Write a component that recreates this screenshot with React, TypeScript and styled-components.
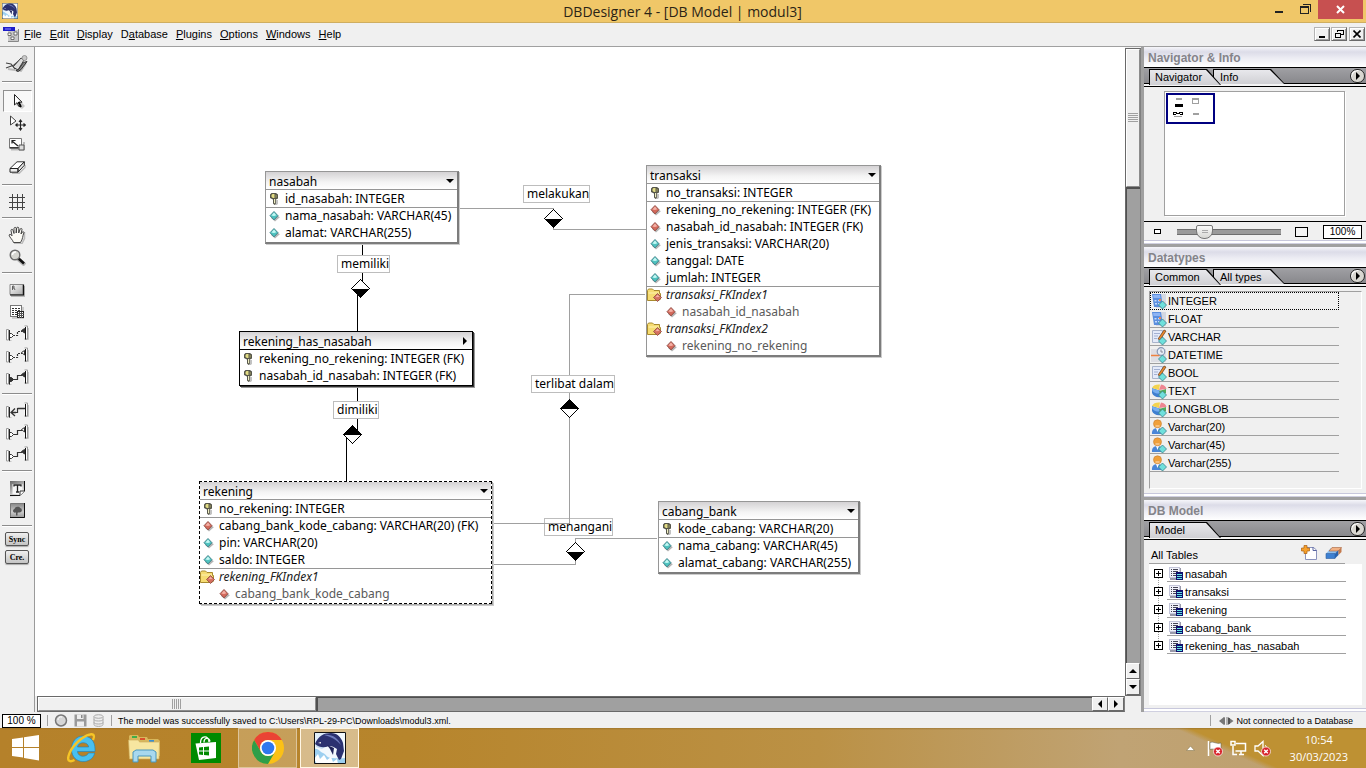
import React from "react";
import styled, { createGlobalStyle, css } from "styled-components";

const UI = `"Liberation Sans", Arial, sans-serif`;
const SEGOE = `"Open Sans", "Noto Sans", sans-serif`;
const DIAGRAM = `"Noto Sans", "Open Sans", sans-serif`;

const GlobalStyle = createGlobalStyle`
  *, *::before, *::after { box-sizing: border-box; }
  body { margin: 0; background: #f0f0f0; font-family: ${UI}; font-size: 11px; color: #000; }
  button { font: inherit; color: inherit; padding: 0; border: 0; background: none; cursor: default; }
  ul { list-style: none; margin: 0; padding: 0; }
  h1, h2, h3, p { margin: 0; font: inherit; }
  svg { display: block; flex: none; }
`;

const Window = styled.div`
  display: flex;
  flex-direction: column;
  min-height: 100vh;
`;

/* ---------- title bar ---------- */

const TitleBar = styled.header`
  display: flex;
  align-items: flex-start;
  height: 23px;
  background: #f0c768;
  border-bottom: 1px solid #cfae60;
`;
const TitleSide = styled.div`
  flex: 1;
  display: flex;
  padding: 3px 0 0 2px;
`;
const TitleText = styled.h1`
  font: 14px/23px ${SEGOE};
  color: #2b2416;
  white-space: nowrap;
`;
const WindowButtons = styled.div`
  flex: 1;
  display: flex;
  justify-content: flex-end;
  padding-right: 3px;
`;
const WindowButton = styled.button<{ $close?: boolean }>`
  display: flex;
  align-items: center;
  justify-content: center;
  width: ${(p) => (p.$close ? 45 : 26)}px;
  height: 19px;
  background: ${(p) => (p.$close ? "#c75050" : "transparent")};
`;

/* ---------- menu ---------- */

const MenuBar = styled.nav`
  display: flex;
  align-items: center;
  gap: 8px;
  height: 24px;
  padding: 0 1px 2px 3px;
  border-bottom: 1px solid #a0a0a0;
  font-size: 11px;
`;
const MenuIcon = styled.span`
  margin-right: -3px;
`;
const MdiButtons = styled.div`
  display: flex;
  gap: 1px;
  margin-left: auto;
`;
const MdiButton = styled.button<{ $apart?: boolean }>`
  display: flex;
  align-items: center;
  justify-content: center;
  width: 16px;
  height: 14px;
  margin-left: ${(p) => (p.$apart ? 1 : 0)}px;
  background: #f0f0f0;
  border: 1px solid;
  border-color: #b4b4b4 #696969 #696969 #b4b4b4;
  box-shadow: inset 1px 1px #fff, inset -1px -1px #a0a0a0;
`;

/* ---------- workspace ---------- */

const Workspace = styled.div`
  display: flex;
  flex: 1;
`;
const Toolbar = styled.aside`
  flex: 0 0 35px;
  border-right: 1px solid #9a9a9a;
`;
const ToolGroup = styled.div<{ $top?: number; $bottom?: number }>`
  display: flex;
  flex-direction: column;
  align-items: center;
  margin: 0 2px;
  padding: ${(p) => p.$top ?? 6}px 0 ${(p) => p.$bottom ?? 4}px;
  border-bottom: 1px solid #8c8c8c;
  box-shadow: 0 1px #fff;
  &:last-child { border-bottom: 0; box-shadow: none; gap: 4px; }
`;
const ToolButton = styled.button<{ $active?: boolean }>`
  display: flex;
  align-items: center;
  justify-content: center;
  width: 29px;
  height: 22px;
  ${(p) =>
    p.$active &&
    css`
      padding-left: 4px;
      background: #f8f8f8;
      border: 1px solid;
      border-color: #909090 #fff #fff #909090;
    `}
`;
const WordButton = styled.button`
  width: 24px;
  height: 14px;
  border: 1px solid #555;
  border-radius: 2px;
  background: linear-gradient(#efefef, #c4c4c4);
  box-shadow: 0 1px 1px #aaa;
  font: bold 8px/11px "Liberation Serif", serif;
  text-align: center;
`;

const Main = styled.main`
  display: flex;
  flex-direction: column;
  flex: 1;
  min-width: 0;
  background: #f0f0f0;
`;
const CanvasRow = styled.div`
  display: flex;
  flex: 1;
`;
const Canvas = styled.section`
  position: relative;
  flex: 1;
  background: #fff;
  overflow: hidden;
`;
const Wires = styled.svg`
  position: absolute;
  inset: 0;
  width: 100%;
  height: 100%;
`;

const ScrollTrack = styled.div<{ $horizontal?: boolean }>`
  display: flex;
  flex-direction: ${(p) => (p.$horizontal ? "row" : "column")};
  flex: ${(p) => (p.$horizontal ? "1" : "0 0 16px")};
  ${(p) => p.$horizontal ? css`height: 16px; margin-left: 2px;` : css`margin-top: 1px;`}
  background: #a0a0a0;
  border: 1px solid #696969;
  border-right-color: #808080;
`;
const ScrollThumb = styled.div<{ $horizontal?: boolean }>`
  display: flex;
  align-items: center;
  justify-content: center;
  flex: ${(p) => (p.$horizontal ? 277 : 137)} 1 0;
  background: #f0f0f0;
  border: 1px solid;
  border-color: #fff #8c8c8c #8c8c8c #fff;
`;
const ScrollRest = styled.div<{ $horizontal?: boolean }>`
  flex: ${(p) => (p.$horizontal ? 778 : 478)} 1 0;
  border-style: solid;
  border-color: #505050;
  border-width: ${(p) => (p.$horizontal ? "1px 0 0 2px" : "2px 0 0 1px")};
`;
const ScrollButton = styled.button`
  display: flex;
  align-items: center;
  justify-content: center;
  flex: 0 0 16px;
  background: #f0f0f0;
  border: 1px solid;
  border-color: #fff #696969 #696969 #fff;
`;
const ScrollBottom = styled.div`
  display: flex;
  padding-right: 16px;
`;

/* ---------- diagram nodes ---------- */

type Tone = "normal" | "strong" | "selected";

const Node = styled.article<{ $x: number; $y: number; $w: number; $tone: Tone }>`
  position: absolute;
  left: ${(p) => p.$x}px;
  top: ${(p) => p.$y}px;
  width: ${(p) => p.$w}px;
  padding-bottom: 1px;
  background: #fff;
  border: 1px solid #969696;
  font: 12px/17px ${DIAGRAM};
  white-space: nowrap;
  ${(p) =>
    p.$tone === "normal" &&
    css`
      border-width: 1px 2px 2px 1px;
      border-right-color: #7c7c7c;
      border-bottom-color: #7c7c7c;
      box-shadow: 1px 1px #ccc;
    `}
  ${(p) =>
    p.$tone === "strong" &&
    css`
      border-color: #000;
      box-shadow: 1px 1px #333, 2px 2px #999;
    `}
  ${(p) =>
    p.$tone === "selected" &&
    css`
      border: 1px dashed #000;
      box-shadow: 1px 1px #aaa, 2px 2px #ccc;
    `}
`;
const NodeHead = styled.h3<{ $strong: boolean }>`
  display: flex;
  align-items: center;
  justify-content: space-between;
  height: 18px;
  padding: 1px 3px 0;
  border-bottom: 1px solid ${(p) => (p.$strong ? "#000" : "#969696")};
  background: linear-gradient(#d4d2d4, #f4f4f4 60%, #fff);
`;
const Field = styled.li<{ $kind: Kind; $line?: boolean }>`
  display: flex;
  align-items: center;
  height: 17px;
  gap: ${(p) => (p.$kind === "index" ? 4 : 5)}px;
  padding-left: ${(p) => (p.$kind === "index" ? 0 : p.$kind === "sub" ? 19 : 3)}px;
  box-shadow: ${(p) => (p.$line ? "inset 0 1px #969696" : "none")};
  font-style: ${(p) => (p.$kind === "index" ? "italic" : "normal")};
  color: ${(p) => (p.$kind === "sub" ? "#5a5a5a" : p.$kind === "index" ? "#222" : "#000")};
`;
const Caption = styled.p<{ $x: number; $y: number }>`
  position: absolute;
  left: ${(p) => p.$x}px;
  top: ${(p) => p.$y}px;
  height: 18px;
  padding: 0 0 0 3px;
  background: #fff;
  border: 1px solid #bdbdbd;
  font: 12px/16px ${DIAGRAM};
  white-space: nowrap;
`;

type Kind = "key" | "fk" | "col" | "index" | "sub";
type Row = [Kind, string, boolean?];

const TABLES: { name: string; x: number; y: number; w: number; tone: Tone; rows: Row[] }[] = [
  { name: "nasabah", x: 230, y: 124, w: 194, tone: "normal", rows: [
    ["key", "id_nasabah: INTEGER"],
    ["col", "nama_nasabah: VARCHAR(45)", true],
    ["col", "alamat: VARCHAR(255)"],
  ] },
  { name: "transaksi", x: 611, y: 118, w: 235, tone: "normal", rows: [
    ["key", "no_transaksi: INTEGER"],
    ["fk", "rekening_no_rekening: INTEGER (FK)", true],
    ["fk", "nasabah_id_nasabah: INTEGER (FK)"],
    ["col", "jenis_transaksi: VARCHAR(20)"],
    ["col", "tanggal: DATE"],
    ["col", "jumlah: INTEGER"],
    ["index", "transaksi_FKIndex1", true],
    ["sub", "nasabah_id_nasabah"],
    ["index", "transaksi_FKIndex2"],
    ["sub", "rekening_no_rekening"],
  ] },
  { name: "rekening_has_nasabah", x: 204, y: 284, w: 234, tone: "strong", rows: [
    ["key", "rekening_no_rekening: INTEGER (FK)"],
    ["key", "nasabah_id_nasabah: INTEGER (FK)"],
  ] },
  { name: "rekening", x: 164, y: 434, w: 293, tone: "selected", rows: [
    ["key", "no_rekening: INTEGER"],
    ["fk", "cabang_bank_kode_cabang: VARCHAR(20) (FK)", true],
    ["col", "pin: VARCHAR(20)"],
    ["col", "saldo: INTEGER"],
    ["index", "rekening_FKIndex1", true],
    ["sub", "cabang_bank_kode_cabang"],
  ] },
  { name: "cabang_bank", x: 623, y: 454, w: 202, tone: "normal", rows: [
    ["key", "kode_cabang: VARCHAR(20)"],
    ["col", "nama_cabang: VARCHAR(45)", true],
    ["col", "alamat_cabang: VARCHAR(255)"],
  ] },
];

const CAPTIONS: [string, number, number][] = [
  ["melakukan", 488, 138],
  ["memiliki", 302, 208],
  ["terlibat dalam", 496, 328],
  ["dimiliki", 298, 354],
  ["menangani", 509, 471],
];

const KeyIcon = () => (
  <svg width="11" height="12" viewBox="0 0 11 12">
    <path d="M5 7h4v3.500L8 12H6z" fill="#999" opacity=".6" />
    <path d="M2.500 0h4.500L9 1.500v4L7 6.500v4L5.500 12 4 10.500v-4L1 5V1.500z" fill="#56564a" />
    <path d="M2.500 2l1-1h2v4L4 5 2.500 4z" fill="#e2dc84" />
    <path d="M6.500 1.500l1.200.7V4.500L6.500 5z" fill="#9a9762" />
    <path d="M5 6h1.200v4.500L5 10z" fill="#f0eec4" />
  </svg>
);
const Gem = ({ red }: { red?: boolean }) => (
  <svg width="11" height="12" viewBox="0 0 11 12">
    <path d="M6 3.500l4.800 3.800L6 11.500 2 8z" fill="#b4b4b4" />
    <path d="M5 1.500L9 5.700 5 9.900 1 5.700z" fill={red ? "#d46a5c" : "#4fc3c0"} stroke={red ? "#8b4a42" : "#3b7c84"} strokeWidth=".9" />
    <path d="M5 2.500L7.300 5.200 5 6 2.400 5.600z" fill={red ? "#f4b0a6" : "#c4f8f4"} />
  </svg>
);
const FolderIcon = () => (
  <svg width="15" height="14" viewBox="0 0 15 14">
    <path d="M.5 2.500l1-1.500h4l1.500 1.500h5.500v3h1V11L12 12.500H.5z" fill="#f6dc72" stroke="#a88a2e" />
    <path d="M1.500 4.500h10.500v1H1.500z" fill="#fff3b0" />
    <path d="M10.500 5.500L14.500 9.500 10.500 13.500 6.500 9.500z" fill="#d4705f" stroke="#8b4a42" strokeWidth=".8" />
    <path d="M10.500 6.800L12.600 9l-4.200.2z" fill="#f4b0a6" />
  </svg>
);
const FIELD_ICON: Record<Kind, React.ReactNode> = {
  key: <KeyIcon />, fk: <Gem red />, sub: <Gem red />, col: <Gem />, index: <FolderIcon />,
};

const Diamond = ({ x, y, up }: { x: number; y: number; up?: boolean }) => (
  <g>
    <path d={`M${x - 9} ${y}L${x} ${y - 9}L${x + 9} ${y}L${x} ${y + 9}Z`} fill="#fff" stroke="#000" />
    <path d={`M${x - 9} ${y}L${x} ${y + (up ? -9 : 9)}L${x + 9} ${y}Z`} fill="#000" />
  </g>
);

/* ---------- tool icons ---------- */

const Relation = ({ left, right, dotted }: { left: string; right: string; dotted?: boolean }) => (
  <svg width="23" height="18" viewBox="0 0 23 18" fill="none">
    <path d="M3 15.500h2.500M20 14.500h2.500V3" stroke="#c4c4c4" />
    <path d="M.5 4.500h2v10.500h-2z" fill="#fff" stroke="#999" />
    <path d="M3.500 5v10.500" stroke="#222" />
    <path d="M18.500 1h3v13h-3" fill="#fff" stroke="#999" />
    <path d="M19.500 2v12.500" stroke="#111" />
    <path d="M7 10.500h4.500V6.500H16" stroke="#333" strokeWidth="1.200" strokeDasharray={dotted ? "2 1" : undefined} />
    {left === "arrow" ? (
      <path d="M9 6.500L5 10.500 9 14M5 10.500h5M11.500 6.500H19" stroke="#333" strokeWidth="1.300" />
    ) : (
      <path d="M4 8.500h1.500L7.500 10.500 5.500 12.500H4" fill={left === "full" ? "#333" : "#fff"} stroke="#333" />
    )}
    {right !== "none" && (
      <path d="M18.500 3.500L15.500 5.500 18.500 8z" fill={right === "full" ? "#333" : "#fff"} stroke="#333" />
    )}
  </svg>
);

const ToolIcon = ({ name }: { name: string }) => {
  switch (name) {
    case "Work mode":
      return (
        <svg width="24" height="18" viewBox="0 0 24 18" fill="none">
          <path d="M3 14L16 16l5-8" stroke="#bbb" strokeWidth="2" />
          <path d="M1 8l5 1 4 5M1 13l8-3 6-5" stroke="#444" strokeWidth="1.200" />
          <path d="M8 12l8-9 3 2-6 10z" fill="#ddd" stroke="#444" />
          <path d="M11 15.500l2.500-1 5-7 3.500-1-6 8-3 2z" fill="#888" stroke="#333" />
          <circle cx="19.500" cy="3" r="2.500" fill="#c8c8c8" stroke="#888" strokeWidth=".8" />
        </svg>
      );
    case "Pointer":
      return (
        <svg width="14" height="16" viewBox="0 0 14 16">
          <path d="M6 6l7 7-3 3-6-4z" fill="#c8c8c8" />
          <path d="M2.500 1.500V12L5 9.700l2 4 1.600-1-1.800-3.500H10z" fill="#fff" stroke="#222" />
          <path d="M6.500 9l2.500 5" stroke="#000" strokeWidth="1.800" />
        </svg>
      );
    case "Move":
      return (
        <svg width="17" height="16" viewBox="0 0 17 16" fill="none">
          <path d="M1.500 1v9l5.500-4z" fill="#fff" stroke="#444" />
          <path d="M11.500 5.500v9M7 10h9M10 7l1.500-2L13 7M10 13l1.500 2 1.500-2M8.500 8.500L6.800 10l1.700 1.500M14.500 8.500L16.300 10l-1.800 1.500" stroke="#222" strokeWidth="1.100" />
        </svg>
      );
    case "Resize":
      return (
        <svg width="17" height="14" viewBox="0 0 17 14" fill="none">
          <path d="M2 11.500h13V4" stroke="#bbb" strokeWidth="2" />
          <path d="M.5.500h12v9H.5z" fill="#fff" stroke="#777" />
          <path d="M.5 10h9" stroke="#000" />
          <path d="M3 3l6 5M3 5.500V2.500h3.500" stroke="#222" strokeWidth="1.200" />
          <path d="M10 7h5v5h-5z" fill="#ddd" stroke="#555" />
        </svg>
      );
    case "Eraser":
      return (
        <svg width="17" height="13" viewBox="0 0 17 13">
          <path d="M3 12.500h7l6-6V4" fill="none" stroke="#bbb" strokeWidth="1.500" />
          <path d="M1 7.500L8 .800h7.300L9 7.500z" fill="#fff" stroke="#333" />
          <path d="M1 7.500h8v3.700H1zM9 7.500L15.300.800v3.500L9 11.200z" fill="#eee" stroke="#222" />
        </svg>
      );
    case "Grid":
      return (
        <svg width="16" height="16" viewBox="0 0 16 16" shapeRendering="crispEdges">
          <path d="M3.500 0v16M8.500 0v16M13.500 0v16M0 3.500h16M0 8.500h16M0 13.500h16" stroke="#444" />
        </svg>
      );
    case "Hand":
      return (
        <svg width="18" height="18" viewBox="0 0 18 18">
          <path d="M6 17.500h8l2.500-5V6" fill="none" stroke="#bbb" strokeWidth="1.500" />
          <path d="M5.500 16.500C5 14 1.500 11.500 1 9c.5-1 1.800-.8 3 .8L3 4.500C3 3 4.700 3 5 4.300L6 7.500V2.500C6.200 1 8 1 8.200 2.300V7l.5-5c.4-1.300 2-1 2.100.2L10.700 7l1.500-4c.6-1 2-.6 1.800.5l-1 4.500 1.300-2c.9-.8 2 0 1.500 1C14.500 10 15 13 12.500 16.500z" fill="#fbfaf5" stroke="#333" strokeWidth=".9" />
        </svg>
      );
    case "Zoom":
      return (
        <svg width="17" height="17" viewBox="0 0 17 17">
          <path d="M9 10l7 6" stroke="#b5b5b5" strokeWidth="4" />
          <path d="M9 9l6 5.500" stroke="#111" strokeWidth="2.600" />
          <circle cx="6" cy="6" r="4.800" fill="#d6d6d0" stroke="#6c6c6c" strokeWidth="1.400" />
          <path d="M3.500 6A3 3 0 0 1 7 3" fill="none" stroke="#fff" strokeWidth="1.500" />
        </svg>
      );
    case "Region":
      return (
        <svg width="16" height="14" viewBox="0 0 16 14">
          <defs><linearGradient id="rg" x2="1" y2="1"><stop stopColor="#fff" /><stop offset="1" stopColor="#aaa" /></linearGradient></defs>
          <path d="M2 3h14v11H2z" fill="#b8b8b8" />
          <path d="M1 1.500h13v10H1z" fill="url(#rg)" stroke="#888" />
          <path d="M1 12h13.500V1.500" fill="none" stroke="#111" strokeWidth="1.200" />
          <path d="M3.500 7V3h1.500v2H3.500M5 5l1 2" fill="none" stroke="#444" strokeWidth=".8" />
        </svg>
      );
    case "Table":
      return (
        <svg width="15" height="14" viewBox="0 0 15 14" shapeRendering="crispEdges">
          <path d="M2 2h12v12H2z" fill="#ccc" />
          <path d="M.5.500h11v11H.5z" fill="#fff" stroke="#777" />
          <path d="M2 3h2v1H2zM5 3h2v1H5zM8 3h2v1H8zM2 5h2v1H2zM5 5h2v1H5zM8 5h2v1H8zM2 7h2v1H2zM5 7h2v1H5zM2 9h2v1H2zM5 9h2v1H5z" fill="#333" />
          <path d="M7.500 6.500h6v6h-6z" fill="#fff" stroke="#222" />
          <path d="M8 8.500h6M8 10.500h6M9.500 7v6M11.500 7v6" stroke="#555" />
        </svg>
      );
    case "1:n non-identifying": return <Relation left="open" right="full" dotted />;
    case "1:1 non-identifying": return <Relation left="open" right="open" dotted />;
    case "n:m": return <Relation left="full" right="full" />;
    case "Generalisation": return <Relation left="arrow" right="none" />;
    case "1:1": return <Relation left="open" right="open" />;
    case "1:n": return <Relation left="open" right="full" />;
    case "Note":
      return (
        <svg width="17" height="17" viewBox="0 0 17 17">
          <defs><linearGradient id="nt" x2=".6" y2="1"><stop stopColor="#666" /><stop offset="1" stopColor="#f4f4f4" /></linearGradient></defs>
          <path d="M1 1h15v11l-4.500 4.500H1z" fill="url(#nt)" />
          <path d="M3.500 4h10v7L10 14H3.500z" fill="#f6f6f6" />
          <path d="M1 15.500h10l4.500-4.500V1" fill="none" stroke="#111" />
          <path d="M11 15.500V11h4.500" fill="#fff" stroke="#333" />
          <path d="M5 6.500V5h7v1.500M8.500 5v7M7 12h3" fill="none" stroke="#222" strokeWidth="1.300" />
        </svg>
      );
    default:
      return (
        <svg width="17" height="17" viewBox="0 0 17 17">
          <defs><linearGradient id="im" x2="0" y2="1"><stop stopColor="#888" /><stop offset=".6" stopColor="#ccc" /><stop offset="1" stopColor="#999" /></linearGradient></defs>
          <path d="M1.500 1.500h14v14h-14z" fill="url(#im)" stroke="#777" />
          <path d="M1 15.500h14.500V1" fill="none" stroke="#111" />
          <path d="M4 9c0-2 2-2 2-3 2-2 5-1 5 0 2 0 2.500 3 1 4-2 1-3 0-3.500 1v2.500H7V10.500C5 11 4 10 4 9z" fill="#555" />
        </svg>
      );
  }
};

const TOOL_GROUPS: { tools: string[]; top?: number; bottom?: number }[] = [
  { tools: ["Work mode"], bottom: 6 },
  { tools: ["Pointer", "Move", "Resize", "Eraser"], top: 8, bottom: 6 },
  { tools: ["Grid"] },
  { tools: ["Hand", "Zoom"] },
  { tools: ["Region", "Table", "1:n non-identifying", "1:1 non-identifying", "n:m"] },
  { tools: ["Generalisation", "1:1", "1:n"] },
  { tools: ["Note", "Image"] },
];

/* ---------- side panels ---------- */

const SidePanel = styled.aside`
  display: flex;
  flex-direction: column;
  flex: 0 0 225px;
  min-width: 0;
  border-left: 3px solid #a0a0a0;
`;
const Section = styled.section<{ $grow?: boolean }>`
  display: flex;
  flex-direction: column;
  flex: ${(p) => (p.$grow ? "1" : "none")};
  border-bottom: ${(p) => (p.$grow ? "0" : "3px solid #a0a0a0")};
`;
const SectionHead = styled.h2`
  height: 20px;
  padding-left: 4px;
  background: linear-gradient(#f6f6fa, #dcdce8 25%, #ececf3 55%, #fff);
  font: bold 12px/22px ${UI};
  color: #84848a;
`;
const TabBar = styled.div`
  position: relative;
  display: flex;
  height: 20px;
  padding: 1px 0 0 5px;
  background: linear-gradient(#a0a0a4, #88888c) 0 0 / 100% 15px no-repeat, #f4f4f4;
  border-top: 1px solid #000;
  border-bottom: 1px solid #000;
  &::before {
    content: "";
    position: absolute;
    inset: 15px 0 auto 0;
    height: 1px;
    background: #000;
  }
`;
const Tab = styled.button<{ $active?: boolean }>`
  position: relative;
  z-index: ${(p) => (p.$active ? 2 : 1)};
  width: 72px;
  height: ${(p) => (p.$active ? 16 : 15)}px;
  margin-right: -8px;
  padding-left: ${(p) => (p.$active ? 6 : 7)}px;
  background: #000;
  clip-path: polygon(0 0, 58px 0, 100% 100%, 0 100%);
  text-align: left;
  line-height: 17px;
  &::before {
    content: "";
    position: absolute;
    inset: 1px 0 0 1px;
    z-index: -1;
    background: linear-gradient(#e8e8ec, #d0d0d4);
    clip-path: polygon(0 0, 56px 0, 70px 100%, 0 100%);
  }
`;
const PanelMenu = styled.button`
  position: relative;
  z-index: 2;
  display: flex;
  align-items: center;
  justify-content: center;
  width: 15px;
  height: 14px;
  margin: 0 1px 0 auto;
  border: 1px solid #222;
  border-radius: 7px;
  background: #d8d6d0;
  box-shadow: inset 1px 1px #fff;
`;
const PanelEdge = styled.div`
  height: 4px;
  background: linear-gradient(#c8c8dc 0 1px, #fff 1px 3px, #d0d0e0 3px);
`;
const NavigatorBody = styled.div`
  padding: 4px 21px 5px 20px;
  border-bottom: 1px solid #000;
`;
const Overview = styled.div`
  height: 125px;
  padding: 1px;
  background: #fff;
  border: 1px solid #a0a0a0;
  box-shadow: 1px 1px #fff;
`;
const Viewport = styled.div`
  width: 49px;
  height: 31px;
  border: 2px solid #000080;
`;
const ZoomRow = styled.div`
  display: flex;
  align-items: center;
  height: 18px;
  padding: 1px 4px 0 10px;
`;
const ZoomSlider = styled.input`
  appearance: none;
  flex: 1;
  min-width: 0;
  height: 16px;
  margin: 0 14px 0 16px;
  background: linear-gradient(#6e6e6e 0 1px, #9a9a9a 1px 5px, #6e6e6e 5px) 0 5px / 100% 6px no-repeat;
  border-radius: 3px;
  &::-webkit-slider-thumb {
    appearance: none;
    width: 17px;
    height: 14px;
    border: 1px solid #777;
    border-radius: 2px 2px 8px 8px;
    background:
      linear-gradient(#aaa, #aaa) 5px 4px / 6px 1px no-repeat,
      linear-gradient(#aaa, #aaa) 5px 6px / 6px 1px no-repeat,
      linear-gradient(#fafafa, #d8d8d4);
  }
`;
const ZoomValue = styled.input`
  width: 39px;
  height: 14px;
  margin-left: 15px;
  padding: 0;
  border: 1px solid #000;
  background: #fff;
  font: 10px/12px ${UI};
  text-align: center;
`;

const TypeList = styled.ul`
  height: 198px;
  margin: 4px 4px 4px 5px;
  padding-right: 22px;
  border: 1px solid;
  border-color: #a0a0a0 #fff #fff #a0a0a0;
`;
const TypeItem = styled.li<{ $focus?: boolean }>`
  display: flex;
  align-items: center;
  gap: 1px;
  height: 18px;
  padding: 1px 0 0 1px;
  border-bottom: 1px solid #a0a0a0;
  ${(p) => p.$focus && css`border: 1px dotted #000; padding: 0;`}
`;

const ModelBody = styled.div`
  display: flex;
  flex-direction: column;
  flex: 1;
  padding: 0 4px 3px 5px;
`;
const ModelHead = styled.div`
  display: flex;
  align-items: center;
  gap: 8px;
  height: 24px;
  margin-right: 17px;
  padding: 2px 3px 0 2px;
  border-bottom: 1px solid #a0a0a0;
  > span { flex: 1; padding-top: 4px; }
`;
const Tree = styled.ul`
  flex: 1;
  background: #fff;
`;
const TreeItem = styled.li`
  display: flex;
  align-items: center;
  height: 18px;
  margin-right: 16px;
  padding-left: 5px;
`;
const Expander = styled.button`
  position: relative;
  width: 9px;
  height: 9px;
  background:
    linear-gradient(#000, #000) center / 5px 1px no-repeat,
    linear-gradient(#000, #000) center / 1px 5px no-repeat, #fff;
  border: 1px solid #000;
  &::after {
    content: "";
    position: absolute;
    left: 3px;
    top: 8px;
    height: 9px;
    border-left: 1px dotted #a0a0a0;
  }
  li:last-child &::after { display: none; }
`;
const TreeLabel = styled.span`
  display: flex;
  align-items: center;
  gap: 2px;
  flex: 1;
  height: 18px;
  margin-left: 4px;
  padding: 2px 0 0 2px;
  border-bottom: 1px solid #a0a0a0;
`;

const DOT_GEM = <path d="M11.500 8l4 4-4 4-4-4z" fill="#6fe0dc" stroke="#3a7f88" strokeWidth=".8" />;

const TypeIcon = ({ kind }: { kind: string }) => (
  <svg width="16" height="16" viewBox="0 0 16 16">
    {kind === "num" && (
      <>
        <path d="M4 1h11v14H5z" fill="#d4d8e2" />
        <path d="M1 1h9l2 13H3z" fill="#5b8ede" />
        <path d="M2 2h7l.5 3H2.500z" fill="#8db4f4" />
        <path d="M3.500 7h2v1.500h-2zM7 7h2v1.500H7zM4 10h2v1.500H4zM7 10h1.500v1.500H7z" fill="#c4dafc" />
        <path d="M8 6h2v2H8z" fill="#e98b4f" />
      </>
    )}
    {kind === "text" && (
      <>
        <path d="M1.500 1.500h10v12h-10z" fill="#e4eafa" stroke="#a9b4cc" />
        <path d="M3 4.500h6M3 7h4M3 9.500h3" stroke="#a3b1d2" />
        <path d="M7 10l6-9 2 1-6 9z" fill="#f08a2c" stroke="#5a3a1c" strokeWidth=".7" />
      </>
    )}
    {kind === "date" && (
      <>
        <path d="M0 2h15v13H0z" fill="#dedee4" />
        <path d="M0 8.500h8l3-3" fill="none" stroke="#ef8240" strokeWidth="1.600" />
        <circle cx="10" cy="4.500" r="3.800" fill="#e6edf7" stroke="#8797b5" strokeWidth="1.200" />
        <path d="M10 2.500v2.500h2" fill="none" stroke="#889" />
      </>
    )}
    {kind === "blob" && (
      <>
        <path d="M1 5v5c1 3 5 5 9 4V8z" fill="#3f7fd0" />
        <path d="M8 8l7-2v4l-5 3z" fill="#4fae5a" />
        <path d="M8 7L1 5C2 2 6 1 9 1.500z" fill="#f3d34f" />
        <path d="M8 7l2-5.500c3 .3 5 2 5.500 4.500z" fill="#ee8591" />
        <path d="M8 7.500L1 5.500C.5 9 5 11 8.500 10.500z" fill="#76aef0" />
      </>
    )}
    {kind === "user" && (
      <>
        <path d="M1 15c-.5-4 2-6 5.500-6S12 11 12 15z" fill="#4a86d8" />
        <path d="M5 9h3l-1.500 4z" fill="#fff" />
        <circle cx="6.500" cy="4.800" r="4" fill="#f0a03a" stroke="#c98030" strokeWidth=".6" />
        <path d="M4.500 6h4v2h-4z" fill="#f7c07c" />
      </>
    )}
    {DOT_GEM}
  </svg>
);

const TreeIcon = () => (
  <svg width="14" height="13" viewBox="0 0 14 13" shapeRendering="crispEdges">
    <path d="M1 1h11v12H1z" fill="#99a" />
    <path d="M0 0h11v11H0z" fill="#c4c6da" />
    <path d="M1 1h9v9H1z" fill="#f2f3fb" />
    <path d="M2 2h1v1H2zM4 2h5v1H4zM2 4h1v1H2zM4 4h5v1H4zM2 6h1v1H2zM4 6h3v1H4zM2 8h1v1H2zM4 8h3v1H4z" fill="#445" />
    <path d="M7 5h7v8H7z" fill="#10106e" />
    <path d="M8 7h5v1H8zM8 9h5v1H8zM8 11h5v1H8z" fill="#5fe6e0" />
  </svg>
);

const Triangle = ({ dir }: { dir: "up" | "down" | "left" | "right" }) => {
  const d = { up: "M0 6h8L4 2z", down: "M0 2h8L4 6z", left: "M6 0v8L2 4z", right: "M2 0v8l4-4z" }[dir];
  return <svg width="8" height="8" viewBox="0 0 8 8"><path d={d} fill="#000" /></svg>;
};

const Grip = ({ vertical }: { vertical?: boolean }) => (
  <svg width="10" height="10" viewBox="0 0 10 10" shapeRendering="crispEdges">
    <path d={vertical ? "M0 .5h10M0 2.500h10M0 4.500h10M0 6.500h10M0 8.500h10" : "M.5 0v10M2.500 0v10M4.500 0v10M6.500 0v10M8.500 0v10"} stroke="#a0a0a0" />
  </svg>
);

const PANEL_TYPES: [string, string][] = [
  ["INTEGER", "num"], ["FLOAT", "num"], ["VARCHAR", "text"], ["DATETIME", "date"], ["BOOL", "text"],
  ["TEXT", "blob"], ["LONGBLOB", "blob"], ["Varchar(20)", "user"], ["Varchar(45)", "user"], ["Varchar(255)", "user"],
];

const PanelTabs = ({ tabs }: { tabs: string[] }) => (
  <TabBar role="tablist">
    {tabs.map((t, i) => (
      <Tab key={t} role="tab" aria-selected={i === 0} $active={i === 0}>{t}</Tab>
    ))}
    <PanelMenu aria-label="Panel menu"><Triangle dir="right" /></PanelMenu>
  </TabBar>
);

/* ---------- status bar ---------- */

const StatusBar = styled.footer`
  display: flex;
  align-items: center;
  height: 16px;
  padding: 1px 13px 0 2px;
  font-size: 9px;
  white-space: nowrap;
`;
const StatusZoom = styled.output`
  width: 39px;
  height: 14px;
  border: 1px solid #000;
  background: #fff;
  text-align: center;
  font-size: 10px;
  line-height: 12px;
`;
const StatusRule = styled.span`
  width: 1px;
  height: 11px;
  margin: 0 6px;
  background: #a0a0a0;
`;
const StatusIcons = styled.span`
  display: flex;
  gap: 6px;
`;
const StatusRight = styled.span`
  display: flex;
  align-items: center;
  margin-left: auto;
  gap: 2px;
`;

/* ---------- taskbar ---------- */

const Taskbar = styled.footer`
  display: flex;
  height: 40px;
  background:
    linear-gradient(#8c642088, transparent 2px),
    linear-gradient(24deg, transparent 33%, #be9133 38%) right / 196px 100% no-repeat,
    linear-gradient(90deg, #b5812a, #b7852c 30%, #bb9145 60%, #c0a374 82%, #bd9f6c);
`;
const TaskButton = styled.button<{ $state?: "open" | "active" }>`
  display: flex;
  align-items: center;
  justify-content: center;
  width: 59px;
  margin-right: 3px;
  border: 1px solid transparent;
  ${(p) =>
    p.$state === "open" &&
    css`background: rgba(255, 255, 255, 0.22); border-color: rgba(255, 255, 255, 0.4);`}
  ${(p) =>
    p.$state === "active" &&
    css`background: rgba(255, 255, 255, 0.45); border-color: #fff6e4;`}
`;
const StartButton = styled(TaskButton)`
  width: 50px;
  margin-right: 2px;
`;
const Tray = styled.div`
  display: flex;
  align-items: center;
  gap: 7px;
  margin-left: auto;
  padding-right: 18px;
`;
const TrayMore = styled.button`
  margin-right: 4px;
`;
const Clock = styled.time`
  display: flex;
  flex-direction: column;
  align-items: center;
  margin-left: 12px;
  color: #fff;
  font: 11px/17px ${SEGOE};
`;

const Orca = ({ size }: { size: number }) => (
  <svg width={size} height={size} viewBox="0 0 32 32">
    <path d="M0 0h32v32H0z" fill="#f2f8fd" />
    <path d="M0 0h14L3 9l-3 5z" fill="#dfeefa" />
    <path d="M0 17c4-1 6 3 9 4s4 5 8 5 8 1 15 0v6H0z" fill="#9ccff0" />
    <path d="M0 27l4-5 2 5 4-4 3 5 4-3 2 5 4-3 1 5H3z" fill="#fff" />
    <path d="M1 12l1 3 6 2 3-2" fill="#c6dcf0" />
    <path d="M1 12C4 4 10 1 17 1c6 0 10 4 12 10l1 8-3 8-2 1-3-6 1-5c-3-2-5-3-8-3-5 2-9 2-14-2z" fill="#2b3170" />
    <path d="M10 3c8-1 14 3 17 10-5-6-10-8-17-10z" fill="#6f7cbc" />
    <path d="M13 13l3 4 3 6 1-7z" fill="#20245a" />
    <path d="M4 11l3-1v1.500z" fill="#fff" />
    <path d="M.5.500h31v31H.5z" fill="none" stroke="#111" />
  </svg>
);

const FailBadge = () => (
  <g>
    <circle cx="12" cy="11.500" r="4.500" fill="#d8232a" stroke="#fff" strokeWidth=".7" />
    <path d="M10.200 9.700l3.600 3.600M13.800 9.700l-3.600 3.600" stroke="#fff" strokeWidth="1.400" />
  </g>
);

const MENUS: [string, string, string][] = [
  ["", "F", "ile"], ["", "E", "dit"], ["", "D", "isplay"], ["D", "a", "tabase"],
  ["", "P", "lugins"], ["", "O", "ptions"], ["", "W", "indows"], ["", "H", "elp"],
];

export default function App() {
  return (
    <Window>
      <GlobalStyle />
      <TitleBar>
        <TitleSide><Orca size={16} /></TitleSide>
        <TitleText>DBDesigner 4 - [DB Model | modul3]</TitleText>
        <WindowButtons>
          <WindowButton aria-label="Minimize">
            <svg width="10" height="10" viewBox="0 0 10 10"><path d="M1 6h8v2H1z" fill="#222" /></svg>
          </WindowButton>
          <WindowButton aria-label="Restore">
            <svg width="11" height="11" viewBox="0 0 11 11" shapeRendering="crispEdges" fill="none">
              <path d="M.5 2.500h8v7h-8z" stroke="#222" /><path d="M0 3h9" stroke="#222" strokeWidth="2" />
              <path d="M3 .5h7.500V8" stroke="#222" />
            </svg>
          </WindowButton>
          <WindowButton $close aria-label="Close">
            <svg width="9" height="9" viewBox="0 0 9 9"><path d="M1 1l7 7M8 1L1 8" stroke="#fff" strokeWidth="2" /></svg>
          </WindowButton>
        </WindowButtons>
      </TitleBar>

      <MenuBar>
        <MenuIcon>
          <svg width="16" height="16" viewBox="0 0 16 16">
            <path d="M5 4h10v11H5z" fill="#c9c9c9" />
            <path d="M15.500 3v12.500H5" fill="none" stroke="#888" />
            <path d="M0 1h12v4H0z" fill="#1c1cc8" />
            <path d="M2 3h6" stroke="#8a8aff" />
            <path d="M5 7h3v2.500H5zM11 6h3v3h-3zM8 11h3v2.500H8z" fill="#fff" stroke="#555" strokeWidth=".8" />
          </svg>
        </MenuIcon>
        {MENUS.map(([a, b, c]) => (
          <button key={a + b + c}>{a}<u>{b}</u>{c}</button>
        ))}
        <MdiButtons>
          <MdiButton aria-label="Minimize document">
            <svg width="8" height="8" viewBox="0 0 8 8"><path d="M1 6h6v2H1z" /></svg>
          </MdiButton>
          <MdiButton aria-label="Restore document">
            <svg width="9" height="9" viewBox="0 0 9 9" shapeRendering="crispEdges" fill="none" stroke="#000">
              <path d="M.5 4.500h5v4h-5zM0 4h6M2.500 3V1.500h6v4H6M2 1h7" />
            </svg>
          </MdiButton>
          <MdiButton $apart aria-label="Close document">
            <svg width="8" height="8" viewBox="0 0 8 8"><path d="M.5.500l7 7M7.500.500l-7 7" stroke="#000" strokeWidth="1.600" /></svg>
          </MdiButton>
        </MdiButtons>
      </MenuBar>

      <Workspace>
        <Toolbar aria-label="Tools">
          {TOOL_GROUPS.map((g) => (
            <ToolGroup key={g.tools[0]} $top={g.top} $bottom={g.bottom}>
              {g.tools.map((t) => (
                <ToolButton key={t} aria-label={t} $active={t === "Pointer"}><ToolIcon name={t} /></ToolButton>
              ))}
            </ToolGroup>
          ))}
          <ToolGroup>
            <WordButton>Sync</WordButton>
            <WordButton>Cre.</WordButton>
          </ToolGroup>
        </Toolbar>

        <Main>
          <CanvasRow>
            <Canvas aria-label="Model">
              {CAPTIONS.map(([t, x, y]) => (
                <Caption key={t} $x={x} $y={y}>{t}</Caption>
              ))}
              <Wires fill="none" shapeRendering="crispEdges">
                <path d="M424 161.500H518.500V182.500H611M610 247.500H534.500V328M534.500 346V476.500H458M458 517.500H540.500V491.500H622" stroke="#a0a0a0" />
                <path d="M327.500 198V208M327.500 226V236M322.500 246V284M322.500 340V354M322.500 372V383M311.500 389V434" stroke="#000" />
                <Diamond x={518.5} y={171.5} />
                <Diamond x={325.5} y={241.5} />
                <Diamond x={317.5} y={387.5} up />
                <Diamond x={534.5} y={361.5} up />
                <Diamond x={540.5} y={504.5} />
              </Wires>
              {TABLES.map((t) => (
                <Node key={t.name} $x={t.x} $y={t.y} $w={t.w} $tone={t.tone}>
                  <NodeHead $strong={t.tone === "strong"}>
                    {t.name}
                    <Triangle dir={t.tone === "strong" ? "right" : "down"} />
                  </NodeHead>
                  <ul>
                    {t.rows.map(([kind, text, line]) => (
                      <Field key={text} $kind={kind} $line={line}>{FIELD_ICON[kind]}{text}</Field>
                    ))}
                  </ul>
                </Node>
              ))}
            </Canvas>
            <ScrollTrack>
              <ScrollThumb><Grip vertical /></ScrollThumb>
              <ScrollRest />
              <ScrollButton aria-label="Scroll up"><Triangle dir="up" /></ScrollButton>
              <ScrollButton aria-label="Scroll down"><Triangle dir="down" /></ScrollButton>
            </ScrollTrack>
          </CanvasRow>
          <ScrollBottom>
            <ScrollTrack $horizontal>
              <ScrollThumb $horizontal><Grip /></ScrollThumb>
              <ScrollRest $horizontal />
              <ScrollButton aria-label="Scroll left"><Triangle dir="left" /></ScrollButton>
              <ScrollButton aria-label="Scroll right"><Triangle dir="right" /></ScrollButton>
            </ScrollTrack>
          </ScrollBottom>
        </Main>

        <SidePanel>
          <Section>
            <SectionHead>Navigator &amp; Info</SectionHead>
            <PanelTabs tabs={["Navigator", "Info"]} />
            <NavigatorBody>
              <Overview>
                <Viewport>
                  <svg width="45" height="27" viewBox="0 0 45 27" shapeRendering="crispEdges">
                    <path d="M8 3h6v2H8zM25 18h6v2h-6z" fill="#a0a0a0" />
                    <path d="M24.500 3.500h6v5h-6zM24 4.500h7" fill="none" stroke="#a0a0a0" />
                    <path d="M7 9h8v3H7z" fill="#000" />
                    <path d="M5 17.500h4M5 18.500h1M5 19.500h3M8 18.500h4M11 17.500h4M14 18.500h1M12 19.500h3" stroke="#000" />
                    <path d="M6 21.500h8" stroke="#a0a0a0" />
                  </svg>
                </Viewport>
              </Overview>
            </NavigatorBody>
            <ZoomRow>
              <svg width="7" height="5" viewBox="0 0 7 5" shapeRendering="crispEdges"><path d="M.5.500h6v4h-6z" fill="#fff" stroke="#000" /></svg>
              <ZoomSlider type="range" aria-label="Zoom" min={0} max={100} defaultValue={22} />
              <svg width="13" height="10" viewBox="0 0 13 10" shapeRendering="crispEdges"><path d="M.5.500h12v9H.5z" fill="#f4f4f4" stroke="#000" /></svg>
              <ZoomValue aria-label="Zoom value" defaultValue="100%" />
            </ZoomRow>
            <PanelEdge />
          </Section>

          <Section>
            <SectionHead>Datatypes</SectionHead>
            <PanelTabs tabs={["Common", "All types"]} />
            <TypeList>
              {PANEL_TYPES.map(([name, kind], i) => (
                <TypeItem key={name} $focus={i === 0}><TypeIcon kind={kind} />{name}</TypeItem>
              ))}
            </TypeList>
            <PanelEdge />
          </Section>

          <Section $grow>
            <SectionHead>DB Model</SectionHead>
            <PanelTabs tabs={["Model"]} />
            <ModelBody>
              <ModelHead>
                <span>All Tables</span>
                <button aria-label="New table">
                  <svg width="16" height="16" viewBox="0 0 16 16">
                    <path d="M4.500 2.500h8L15.500 5v9.500h-11z" fill="#fff" stroke="#8a93bd" />
                    <path d="M12 2v3.500h3.500" fill="none" stroke="#5a65a0" />
                    <path d="M3 .5h3V3h2.500v3H6v2.500H3V6H.5V3H3z" fill="#f6a02c" stroke="#a85f12" strokeWidth=".7" />
                  </svg>
                </button>
                <button aria-label="Delete table">
                  <svg width="17" height="14" viewBox="0 0 17 14">
                    <path d="M1 7.500L6 2h9.500L10 8z" fill="#8fc0f0" />
                    <path d="M7 1.500h9.500L13.500 5H4z" fill="#f2b184" stroke="#a5633c" strokeWidth=".6" />
                    <path d="M1 7.500h9v5H1z" fill="#3d80d2" stroke="#2f5e9c" strokeWidth=".6" />
                    <path d="M10 7.500L13.500 4v5L10 12.500z" fill="#2a62ad" />
                    <path d="M13.500 4.500L16.500 1.500V6l-3 3z" fill="#c47a4d" />
                  </svg>
                </button>
              </ModelHead>
              <Tree>
                {["nasabah", "transaksi", "rekening", "cabang_bank", "rekening_has_nasabah"].map((n) => (
                  <TreeItem key={n}>
                    <Expander aria-label={`Expand ${n}`} />
                    <TreeLabel><TreeIcon />{n}</TreeLabel>
                  </TreeItem>
                ))}
              </Tree>
            </ModelBody>
            <PanelEdge />
          </Section>
        </SidePanel>
      </Workspace>

      <StatusBar>
        <StatusZoom>100 %</StatusZoom>
        <StatusRule />
        <StatusIcons>
          <svg width="14" height="13" viewBox="0 0 14 13"><circle cx="7" cy="6.500" r="5.500" fill="#d6d6d6" stroke="#777" strokeWidth="1.500" /><path d="M4 6a3 3 0 0 1 4-3" stroke="#fff" fill="none" /></svg>
          <svg width="13" height="13" viewBox="0 0 13 13"><path d="M.5.500h12v12h-12z" fill="#9a9a9a" /><path d="M3 .5h6.500V5H3zM3 7.500h7v5H3z" fill="#eee" /><path d="M7 1h1.500v3H7z" fill="#888" /></svg>
          <svg width="12" height="13" viewBox="0 0 12 13" fill="#eee" stroke="#aaa"><path d="M1 2.500v8c0 2.500 9 2.500 9 0v-8" /><ellipse cx="5.500" cy="2.500" rx="4.500" ry="1.800" /><path d="M1 5.500c0 2 9 2 9 0M1 8.500c0 2 9 2 9 0" fill="none" /></svg>
        </StatusIcons>
        <StatusRule />
        <span>The model was successfully saved to C:\Users\RPL-29-PC\Downloads\modul3.xml.</span>
        <StatusRight>
          <StatusRule />
          <svg width="15" height="10" viewBox="0 0 15 10"><path d="M0 5l5-4v8zM6 1v8l-1.500-1V2zM9 1l5.500 4L9 9zM7.500 1h1v8h-1z" fill="#777" /><path d="M10 2v6" stroke="#333" /></svg>
          Not connected to a Database
        </StatusRight>
      </StatusBar>

      <Taskbar>
        <StartButton aria-label="Start">
          <svg width="28" height="26" viewBox="0 0 28 26" fill="#fff"><path d="M1 4l11-1.600V12H1zM13 2.200L28 0v12H13zM1 13h11v9.600L1 21zM13 13h15v12.500L13 23z" /></svg>
        </StartButton>
        <TaskButton aria-label="Internet Explorer">
          <svg width="32" height="32" viewBox="0 0 32 32">
            <path d="M17 4c7 0 12 5 12 13v2.500H11.500c.5 6 9 6 11 1.500h6.200C26 33 6 33 5.500 17.500 5.500 10 10 4 17 4zm-5.500 11h11.200c-.6-5.700-10.400-5.700-11.200 0z" fill="#49c0f0" stroke="#1c7fbb" strokeWidth=".6" />
            <path d="M27 8c2-4 1-6.500-3-5.500C16 4 5 15 2.500 24c-1.300 5 1.500 6.500 6 4" fill="none" stroke="#f6c526" strokeWidth="2.400" />
          </svg>
        </TaskButton>
        <TaskButton aria-label="File Explorer">
          <svg width="34" height="32" viewBox="0 0 34 32">
            <path d="M2 4l1-1h8l1 2h8l1 2h10l2 2v15H2z" fill="#d7b75c" />
            <path d="M5 4h5v2H5z" fill="#3fae49" /><path d="M13 6h5v2h-5z" fill="#d9512c" /><path d="M22 8h5v2h-5z" fill="#3a8fd0" />
            <path d="M1.500 8h10l1 2h20L32 27H2.500z" fill="#f7e6a0" stroke="#cfae5c" strokeWidth=".7" />
            <path d="M6 30V20l3-2h17l3 2v10h-5v-6H11v6z" fill="#a8d8ee" stroke="#4a97bd" />
          </svg>
        </TaskButton>
        <TaskButton aria-label="Store">
          <svg width="30" height="30" viewBox="0 0 30 30">
            <path d="M0 0h30v30H0z" fill="#008a00" />
            <path d="M4.500 10.500L25 9v16l-17 2z" fill="#fff" />
            <path d="M9.500 10c0-8 8.500-8 8.500-1M13 9.500c0-5 5-5.500 6-1" fill="none" stroke="#fff" strokeWidth="1.300" />
            <path d="M8 14.500l4-.4v3.400H8zM13 14l5-.5v4h-5zM8 18.500h4v3.500l-4-.4zM13 18.500h5v4l-5-.4z" fill="#008a00" />
          </svg>
        </TaskButton>
        <TaskButton $state="open" aria-label="Google Chrome">
          <svg width="32" height="32" viewBox="0 0 32 32">
            <circle cx="16" cy="16" r="16" fill="#fbc116" />
            <path d="M2.140 8A16 16 0 0 1 29.860 8H16a8 8 0 0 0-6.930 12z" fill="#ea4335" />
            <path d="M2.140 8L9.070 20A8 8 0 0 0 22.930 20L16 32A16 16 0 0 1 2.140 8z" fill="#2e9e49" />
            <circle cx="16" cy="16" r="8" fill="#fff" /><circle cx="16" cy="16" r="6.300" fill="#2f78ee" />
          </svg>
        </TaskButton>
        <TaskButton $state="active" aria-label="DBDesigner 4"><Orca size={32} /></TaskButton>
        <Tray>
          <TrayMore aria-label="Show hidden icons">
            <svg width="9" height="6" viewBox="0 0 9 6"><path d="M.5 5.500h8L4.500 1z" fill="#fff" stroke="#8a7a50" strokeWidth=".6" /></svg>
          </TrayMore>
          <svg width="17" height="17" viewBox="0 0 17 17"><path d="M2.500 1v15" stroke="#fff" strokeWidth="1.500" /><path d="M4 2.500c4-1.500 6 2 11 .5v7c-6 1-7-2-11-.5z" fill="#fff" stroke="#554" strokeWidth=".5" /><FailBadge /></svg>
          <svg width="17" height="17" viewBox="0 0 17 17" fill="none" stroke="#fff" strokeWidth="1.500"><path d="M6 3.500h9.500v7.500H5.500M9 14.500h5M11 11v3.500M3 6v8.500h4" /><path d="M1 1.500h4V5H1z" /></svg>
          <svg width="17" height="17" viewBox="0 0 17 17"><path d="M1 6h3l5-4.500v14L4 11H1z" fill="none" stroke="#fff" strokeWidth="1.300" /><path d="M11 5c1 1 1.500 2 1.500 3" fill="none" stroke="#fff" /><FailBadge /></svg>
          <Clock><span>10:54</span><span>30/03/2023</span></Clock>
        </Tray>
      </Taskbar>
    </Window>
  );
}
